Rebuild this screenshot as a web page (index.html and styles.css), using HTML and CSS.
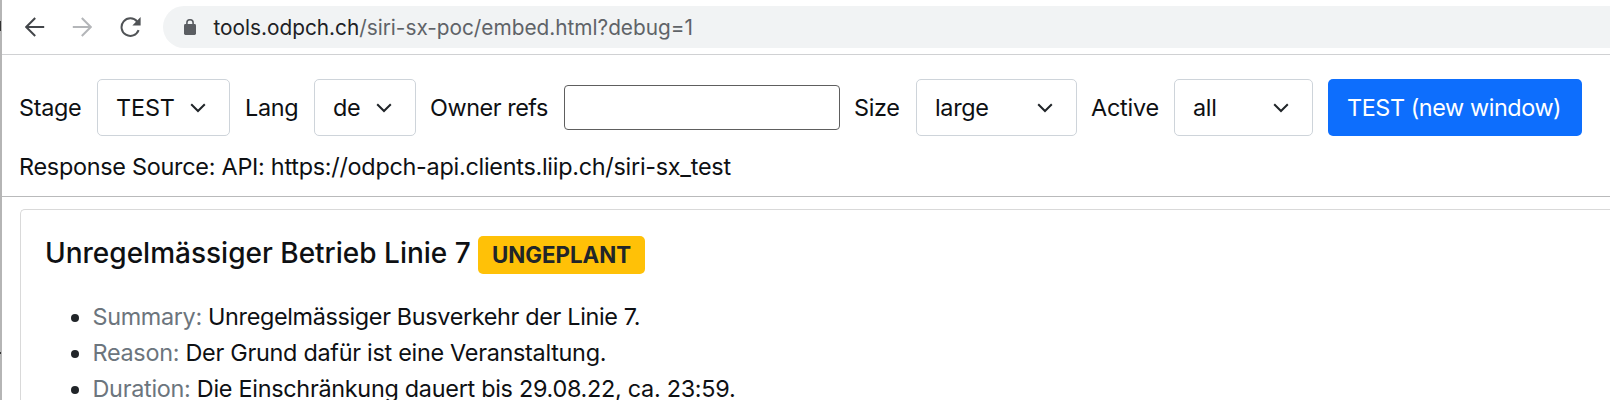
FILE: index.html
```html
<!DOCTYPE html>
<html lang="de">
<head>
<meta charset="utf-8">
<title>tools.odpch.ch</title>
<link rel="stylesheet" href="styles.css">
</head>
<body>
<div class="window">
  <div class="edge"><i class="mark mark-top"></i><i class="mark mark-low"></i></div>
  <div class="main">
    <header class="chrome">
      <svg class="nav-icon back" viewBox="0 0 20 20"><path d="M19.2 10H1.6M10.2 1L1.2 10l9 9"/></svg>
      <svg class="nav-icon forward" viewBox="0 0 20 20"><path d="M.8 10h17.6M9.8 1l9 9-9 9"/></svg>
      <svg class="nav-icon reload" viewBox="0 0 22 20"><path d="M18.6 13.2A8.8 8.8 0 1 1 17.2 4.6"/><path class="solid" d="M20.6 0v8.4h-8.2z"/></svg>
      <div class="address">
        <svg class="lock" viewBox="0 0 12 16"><rect y="5" width="12" height="11" rx="1.4"/><path d="M2.9 6V3.8a3.1 3.1 0 0 1 6.2 0V6"/></svg>
        <span class="url"><span class="host">tools.odpch.ch</span>/siri-sx-poc/embed.html?debug=1</span>
      </div>
    </header>
    <form class="controls">
      <label class="w-stage">Stage</label>
      <div class="select s-stage"><span>TEST</span><svg viewBox="0 0 16 10"><path d="M1.2 1.2L8 8l6.8-6.8"/></svg></div>
      <label class="w-lang">Lang</label>
      <div class="select s-lang"><span>de</span><svg viewBox="0 0 16 10"><path d="M1.2 1.2L8 8l6.8-6.8"/></svg></div>
      <label class="w-owner">Owner refs</label>
      <input class="owner" type="text">
      <label class="w-size">Size</label>
      <div class="select s-size"><span>large</span><svg viewBox="0 0 16 10"><path d="M1.2 1.2L8 8l6.8-6.8"/></svg></div>
      <label class="w-active">Active</label>
      <div class="select s-active"><span>all</span><svg viewBox="0 0 16 10"><path d="M1.2 1.2L8 8l6.8-6.8"/></svg></div>
      <a class="button">TEST (new window)</a>
    </form>
    <div class="source"><span>Response Source: API: https://odpch-api.clients.liip.ch/siri-sx_test</span></div>
    <article class="card">
      <h1 class="title"><span class="headline">Unregelmässiger Betrieb Linie 7</span><span class="badge">UNGEPLANT</span></h1>
      <ul class="facts">
        <li class="f1"><span class="key">Summary:</span> Unregelmässiger Busverkehr der Linie 7.</li>
        <li class="f2"><span class="key">Reason:</span> Der Grund dafür ist eine Veranstaltung.</li>
        <li class="f3"><span class="key">Duration:</span> Die Einschränkung dauert bis 29.08.22, ca. 23:59.</li>
      </ul>
    </article>
  </div>
</div>
</body>
</html>
```
FILE: styles.css
```css
* { box-sizing: border-box; }
body { margin: 0; height: 400px; overflow: hidden; background: #fff; color: #0e1013; font: 23.4px/36px Inter, "Liberation Sans", sans-serif; }
svg { display: block; flex: none; fill: none; stroke: #212529; stroke-width: 2; }
.window { display: flex; height: 400px; overflow: hidden; }
.edge { position: relative; flex: none; width: 2px; background: #b5b5b5; }
.mark { position: absolute; left: 0; width: 1px; background: #333; }
.mark-top { top: 21px; height: 10px; }
.mark-low { top: 352px; height: 2px; }
.main { display: flex; flex: 1; flex-direction: column; min-width: 0; height: 400px; }
.chrome { display: flex; flex: none; align-items: center; height: 55px; border-bottom: 1px solid #d0d1d3; padding-left: 23px; }
.nav-icon { width: 20px; height: 20px; }
.back { stroke: #43464a; }
.forward { margin-left: 27px; stroke: #b4b6b9; }
.reload { width: 22px; margin-left: 28px; stroke: #505356; }
.reload .solid { fill: #505356; stroke: none; }
.address { display: flex; align-items: center; flex: 1; height: 42px; margin-left: 21px; padding-left: 21px; background: #f1f3f4; border-radius: 21px 0 0 21px; }
.lock { width: 12px; height: 16px; fill: #5b5e62; stroke: none; }
.lock path { fill: none; stroke: #5b5e62; stroke-width: 1.6; }
.url { margin-left: 17.5px; padding-top: 1px; font-size: 20.8px; color: #5f6368; white-space: nowrap; letter-spacing: -.01px; }
.host { color: #202124; }
.controls { display: flex; flex: none; align-items: center; height: 57px; margin: 24px 0 0 18px; white-space: nowrap; letter-spacing: -.3px; }
label { flex: none; text-indent: -1px; }
.w-stage { width: 77px; }
.w-lang { width: 68px; margin-left: 16px; }
.w-owner { width: 133px; margin-left: 15px; letter-spacing: -.45px; }
.w-size { width: 61px; margin-left: 15px; }
.w-active { width: 82px; margin-left: 15px; letter-spacing: -.2px; }
.select { display: flex; flex: none; align-items: center; justify-content: space-between; height: 57px; padding: 0 23px 0 18px; border: 1px solid #ced4da; border-radius: 5px; }
.select svg { width: 16px; height: 10px; }
.s-stage { width: 133px; letter-spacing: -.1px; }
.s-lang { width: 102px; }
.s-size { width: 161px; }
.s-active { width: 139px; }
.owner { flex: none; width: 276px; height: 45px; border: 1px solid #5e5e5e; border-radius: 4px; background: #fff; }
.button { flex: none; width: 254px; height: 57px; margin-left: 15px; padding-left: 19px; border-radius: 5px; background: #0d6efd; color: #fff; line-height: 57px; letter-spacing: -.42px; }
.source { flex: none; height: 61px; padding: 13px 0 0 17px; border-bottom: 1px solid #b9babb; white-space: nowrap; letter-spacing: -.265px; }
.card { flex: 1; min-height: 0; overflow: hidden; margin: 12px 0 0 18px; padding: 23px 0 0 24px; border: 1px solid #d9d9d9; border-width: 1px 0 0 1px; border-radius: 5px 0 0; }
.title { display: flex; margin: 0; font-size: 28px; font-weight: 500; line-height: 40px; white-space: nowrap; }
.headline { width: 433px; }
.badge { width: 167px; height: 38px; margin-top: 3px; border-radius: 5px; background: #ffc107; color: #212529; font-size: 22.3px; font-weight: 700; line-height: 38px; text-align: center; }
.facts { height: 108px; margin: 25px 0 0; padding: 0 0 0 47.5px; white-space: nowrap; letter-spacing: -.28px; }
.facts li::marker { color: #212529; }
.f1 { letter-spacing: -.34px; }
.key { color: #6c757d; }
```
